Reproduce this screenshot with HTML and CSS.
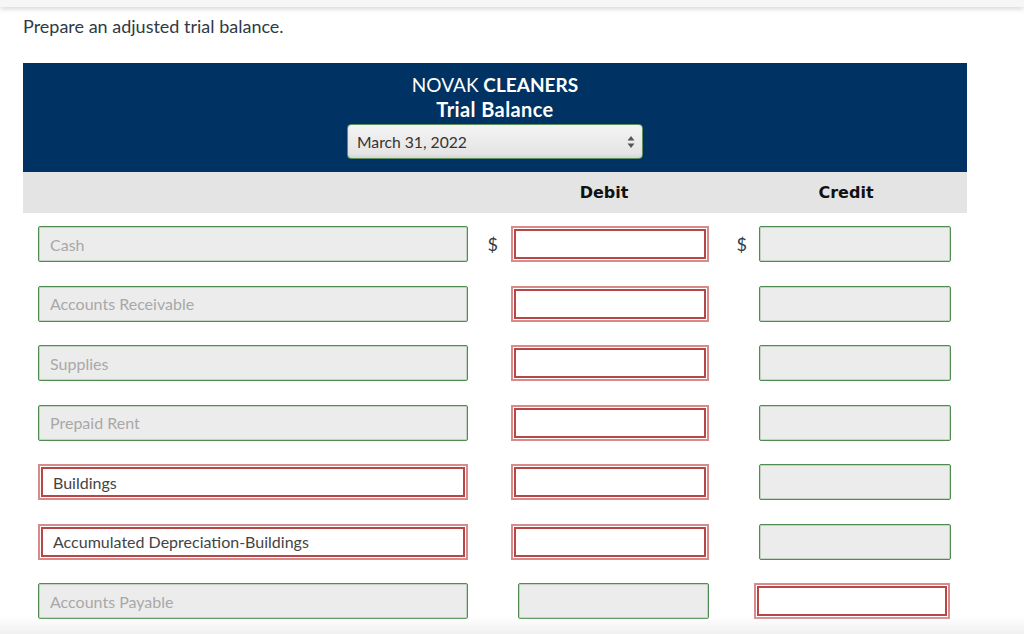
FILE: index.html
```html
<!DOCTYPE html>
<html lang="en">
<head>
<meta charset="utf-8">
<title>Adjusted trial balance</title>
<link rel="stylesheet" href="styles.css">
</head>
<body>
<div class="topbar"></div>
<p class="prompt">Prepare an adjusted trial balance.</p>
<div class="sheet">
  <div class="sheet-head">
    <div class="company">NOVAK <b>CLEANERS</b></div>
    <div class="title">Trial Balance</div>
    <div class="select">
      <span>March 31, 2022</span>
      <svg class="arrows" width="8" height="14" viewBox="0 0 8 14"><path d="M4 1 L7.5 5.5 H0.5 Z M4 13 L7.5 8.5 H0.5 Z" fill="#555"/></svg>
    </div>
  </div>
  <div class="cols">
    <div class="col-spacer"></div>
    <div class="col-debit">Debit</div>
    <div class="col-credit">Credit</div>
  </div>
  <div class="rows">
    <div class="row">
      <div class="acct"><input class="field ok" readonly placeholder="Cash"></div>
      <div class="amt debit"><span class="dollar">$</span><span class="bad-wrap dw"><input class="field bad" readonly></span></div>
      <div class="amt credit"><span class="dollar">$</span><input class="field ok cw" readonly></div>
    </div>
    <div class="row">
      <div class="acct"><input class="field ok" readonly placeholder="Accounts Receivable"></div>
      <div class="amt debit"><span class="bad-wrap dw"><input class="field bad" readonly></span></div>
      <div class="amt credit"><input class="field ok cw" readonly></div>
    </div>
    <div class="row">
      <div class="acct"><input class="field ok" readonly placeholder="Supplies"></div>
      <div class="amt debit"><span class="bad-wrap dw"><input class="field bad" readonly></span></div>
      <div class="amt credit"><input class="field ok cw" readonly></div>
    </div>
    <div class="row">
      <div class="acct"><input class="field ok" readonly placeholder="Prepaid Rent"></div>
      <div class="amt debit"><span class="bad-wrap dw"><input class="field bad" readonly></span></div>
      <div class="amt credit"><input class="field ok cw" readonly></div>
    </div>
    <div class="row">
      <div class="acct"><span class="bad-wrap aw"><input class="field bad" readonly value="Buildings"></span></div>
      <div class="amt debit"><span class="bad-wrap dw"><input class="field bad" readonly></span></div>
      <div class="amt credit"><input class="field ok cw" readonly></div>
    </div>
    <div class="row">
      <div class="acct"><span class="bad-wrap aw"><input class="field bad" readonly value="Accumulated Depreciation-Buildings"></span></div>
      <div class="amt debit"><span class="bad-wrap dw"><input class="field bad" readonly></span></div>
      <div class="amt credit"><input class="field ok cw" readonly></div>
    </div>
    <div class="row">
      <div class="acct"><input class="field ok" readonly placeholder="Accounts Payable"></div>
      <div class="amt debit"><input class="field ok dgw" readonly></div>
      <div class="amt credit"><span class="bad-wrap crw"><input class="field bad" readonly></span></div>
    </div>
  </div>
</div>
<div class="bottom-fade"></div>
</body>
</html>
```
FILE: styles.css
```css
* { box-sizing: border-box; }
html, body { margin: 0; padding: 0; background: #fff; }
body {
  font-family: Lato, "Open Sans", sans-serif;
  color: #2f3a45;
  width: 1024px;
  height: 634px;
  overflow: hidden;
}
.topbar {
  height: 7px;
  background: #f6f6f6;
  box-shadow: 0 2px 5px rgba(0,0,0,0.16);
}
.prompt {
  margin: 7px 0 0 23px;
  font-size: 18px;
  line-height: 24px;
  color: #2f3a45;
}
.sheet {
  width: 944px;
  margin: 25px 0 0 23px;
}
.sheet-head {
  background: #003263;
  color: #fff;
  padding: 9px 0 13px;
  display: flex;
  flex-direction: column;
  align-items: center;
}
.company, .title {
  font-size: 19px;
  line-height: 25px;
}
.company b { font-weight: 700; }
.title { font-size: 20px; font-weight: 700; letter-spacing: 0.4px; }
.select {
  margin-top: 2px;
  width: 296px;
  height: 35px;
  border: 1px solid #5f8f5c;
  border-radius: 4px;
  background: linear-gradient(#f4f4f4, #e2e2e2);
  box-shadow: inset 0 -2px 3px rgba(0,0,0,0.06);
  color: #333;
  font-size: 15.7px;
  display: flex;
  align-items: center;
  justify-content: space-between;
  padding: 0 7px 0 9px;
}
.arrows { display: block; }
.cols {
  display: flex;
  height: 41px;
  align-items: center;
  background: #e4e4e4;
  font-family: "DejaVu Sans", Verdana, sans-serif;
  font-weight: 700;
  font-size: 16px;
  color: #111;
}
.col-spacer { width: 445px; }
.col-debit { width: 272px; text-align: center; }
.col-credit { width: 212px; text-align: center; }
.rows { padding-top: 13px; }
.row {
  display: flex;
  align-items: center;
  height: 36px;
  padding-left: 15px;
  margin-bottom: 23.5px;
}
.acct { width: 430px; display: flex; }
.amt {
  display: flex;
  align-items: center;
  justify-content: flex-end;
}
.debit { width: 241px; }
.credit { width: 242px; }
.dollar {
  font-size: 18px;
  color: #2f3a45;
  margin-right: 13px;
}
.credit .dollar { margin-right: 12px; }
.field {
  font-family: Lato, "Open Sans", sans-serif;
  font-size: 16px;
  outline: none;
  margin: 0;
}
.field.ok {
  height: 36px;
  width: 430px;
  border: 1px solid #4f8c50;
  border-radius: 2px;
  box-shadow: inset 0 0 0 1px rgba(120,170,120,0.35);
  background: #ececec;
  padding: 0 11px;
  color: #555;
}
.field.ok::placeholder { color: #a8a8a8; opacity: 1; }
.cw { width: 192px !important; }
.dgw { width: 191px !important; }
.bad-wrap {
  display: block;
  height: 36px;
  border: 2px solid #d88b8b;
  padding: 1px;
  background: #fff;
}
.aw { width: 430px; }
.dw { width: 198px; }
.crw { width: 196px; margin-right: 1px; }
.field.bad {
  display: block;
  width: 100%;
  height: 30px;
  border: 2px solid #b84646;
  background: #fff;
  padding: 0 10px;
  color: #444;
}
.bottom-fade {
  position: fixed;
  left: 0;
  right: 0;
  bottom: 0;
  height: 18px;
  background: linear-gradient(rgba(240,240,240,0), #f0f0f0);
  pointer-events: none;
}
```
